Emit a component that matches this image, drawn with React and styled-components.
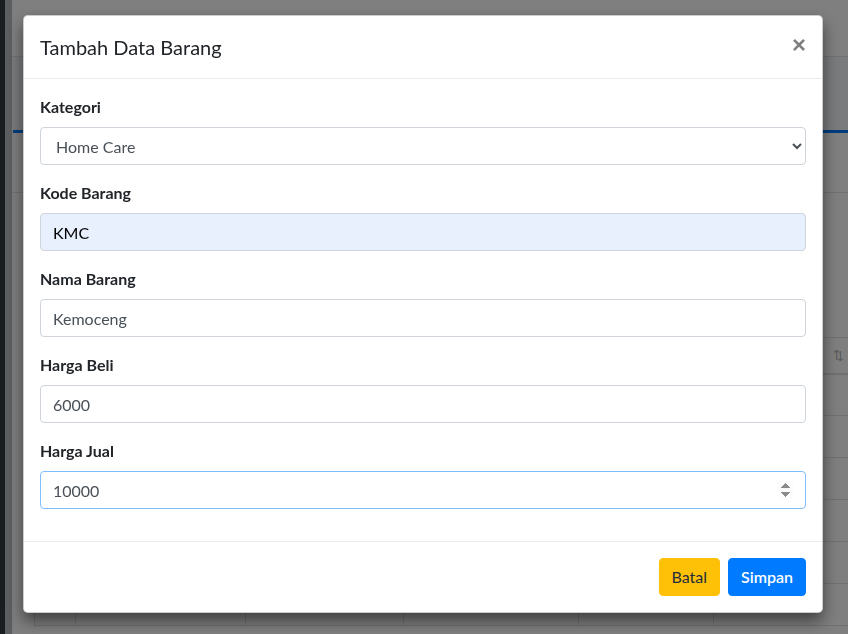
import styled, { createGlobalStyle } from "styled-components";

const GlobalStyle = createGlobalStyle`
  html, body {
    margin: 0;
    padding: 0;
    height: 100%;
  }
  body {
    font-family: "Lato", "Liberation Sans", sans-serif;
    background: #f4f6f9;
    overflow: hidden;
  }
  * {
    box-sizing: border-box;
  }
`;

const Wrapper = styled.div`
  display: flex;
  height: 634px;
  overflow: hidden;
`;

const Sidebar = styled.aside`
  width: 5px;
  background: #343a40;
  flex-shrink: 0;
`;

const SideEdge = styled.div`
  width: 7px;
  background: #b8bcc0;
  flex-shrink: 0;
`;

const Content = styled.div`
  flex: 1;
  display: flex;
  flex-direction: column;
  min-width: 0;
`;

const Navbar = styled.nav`
  height: 57px;
  background: #fff;
  border-bottom: 1px solid #dee2e6;
  flex-shrink: 0;
`;

const PageTitle = styled.h1`
  margin: 0;
  padding: 18px 10px 0;
  height: 73px;
  font-size: 22px;
  font-weight: 400;
  color: #212529;
`;

const Card = styled.div`
  margin-left: 1px;
  background: #fff;
  border-top: 3px solid #007bff;
  flex: 1;
`;

const CardHeader = styled.div`
  height: 60px;
  border-bottom: 1px solid #dee2e6;
`;

const CardBody = styled.div`
  padding: 144px 0 0 21px;
`;

const Table = styled.table`
  border-collapse: collapse;
  table-layout: fixed;
`;

const Th = styled.th`
  height: 36px;
  border: 1px solid #dee2e6;
  border-bottom-width: 2px;
  border-right: 0;
  text-align: right;
  padding: 0 4px;
  font-size: 13px;
  font-weight: 400;
  color: #b0b0b0;
`;

const Td = styled.td`
  height: 42px;
  border: 1px solid #dee2e6;
  border-right: 0;
`;

const Backdrop = styled.div`
  position: fixed;
  inset: 0;
  background: rgba(0, 0, 0, 0.5);
  display: flex;
  justify-content: flex-start;
  align-items: flex-start;
  padding: 15px 0 0 23px;
`;

const Modal = styled.div`
  width: 800px;
  background: #fff;
  border: 1px solid rgba(0, 0, 0, 0.2);
  border-radius: 4.8px;
  box-shadow: 0 8px 16px rgba(0, 0, 0, 0.5);
  display: flex;
  flex-direction: column;
`;

const ModalHeader = styled.div`
  display: flex;
  align-items: center;
  justify-content: space-between;
  padding: 16px;
  border-bottom: 1px solid #e9ecef;
`;

const ModalTitle = styled.h4`
  margin: 0;
  font-size: 20px;
  line-height: 30px;
  font-weight: 400;
  color: #212529;
`;

const Close = styled.button`
  border: 0;
  background: transparent;
  padding: 0;
  margin-bottom: 4px;
  font-family: "Liberation Sans", sans-serif;
  font-size: 24px;
  font-weight: 700;
  line-height: 1;
  color: #000;
  opacity: 0.5;
  cursor: pointer;
`;

const ModalBody = styled.div`
  padding: 16px;
`;

const FormGroup = styled.div`
  margin-bottom: 16px;
`;

const Label = styled.label`
  display: block;
  margin-bottom: 8px;
  font-size: 16px;
  line-height: 24px;
  font-weight: 700;
  color: #212529;
`;

const fieldCss = `
  display: block;
  width: 100%;
  height: 38px;
  padding: 6px 12px;
  font-family: "Lato", "Liberation Sans", sans-serif;
  font-size: 16px;
  line-height: 24px;
  color: #495057;
  border-radius: 4px;
  outline: none;
`;

const Select = styled.select`
  ${fieldCss}
  padding-left: 11px;
  background: #fff;
  border: 1px solid #ced4da;
`;

const Input = styled.input`
  ${fieldCss}
  background: ${(p) => (p.$autofill ? "#e8f0fe" : "#fff")};
  color: ${(p) => (p.$autofill ? "#000" : "#495057")};
  border: 1px solid ${(p) => (p.$focus ? "#80bdff" : "#ced4da")};

  &::-webkit-inner-spin-button {
    opacity: 1;
  }
`;

const ModalFooter = styled.div`
  display: flex;
  justify-content: flex-end;
  align-items: center;
  padding: 12px;
  border-top: 1px solid #e9ecef;
`;

const Button = styled.button`
  margin: 4px;
  height: 38px;
  padding: 6px 12px;
  border: 1px solid ${(p) => p.$bg};
  border-radius: 4px;
  background: ${(p) => p.$bg};
  color: ${(p) => p.$color};
  font-family: "Lato", "Liberation Sans", sans-serif;
  font-size: 16px;
  line-height: 24px;
  font-weight: ${(p) => p.$weight || 400};
  cursor: pointer;
`;

const columns = [41, 170, 158, 175, 135, 135];
const rows = [1, 2, 3, 4, 5, 6];

export default function App() {
  return (
    <>
      <GlobalStyle />
      <Wrapper>
        <Sidebar />
        <SideEdge />
        <Content>
          <Navbar />
          <PageTitle>Data Barang</PageTitle>
          <Card>
            <CardHeader />
            <CardBody>
              <Table>
                <colgroup>
                  {columns.map((w, i) => (
                    <col key={i} style={{ width: w }} />
                  ))}
                </colgroup>
                <thead>
                  <tr>
                    {columns.map((_, i) => (
                      <Th key={i}>{i === columns.length - 1 ? "⇅" : ""}</Th>
                    ))}
                  </tr>
                </thead>
                <tbody>
                  {rows.map((r) => (
                    <tr key={r}>
                      {columns.map((_, i) => (
                        <Td key={i} />
                      ))}
                    </tr>
                  ))}
                </tbody>
              </Table>
            </CardBody>
          </Card>
        </Content>
      </Wrapper>

      <Backdrop>
        <Modal>
          <ModalHeader>
            <ModalTitle>Tambah Data Barang</ModalTitle>
            <Close aria-label="Close">×</Close>
          </ModalHeader>
          <ModalBody>
            <FormGroup>
              <Label>Kategori</Label>
              <Select defaultValue="Home Care">
                <option>Home Care</option>
                <option>Food</option>
                <option>Personal Care</option>
              </Select>
            </FormGroup>
            <FormGroup>
              <Label>Kode Barang</Label>
              <Input $autofill defaultValue="KMC" />
            </FormGroup>
            <FormGroup>
              <Label>Nama Barang</Label>
              <Input defaultValue="Kemoceng" />
            </FormGroup>
            <FormGroup>
              <Label>Harga Beli</Label>
              <Input defaultValue="6000" />
            </FormGroup>
            <FormGroup>
              <Label>Harga Jual</Label>
              <Input $focus type="number" defaultValue="10000" />
            </FormGroup>
          </ModalBody>
          <ModalFooter>
            <Button $bg="#ffc107" $color="#1f2d3d">
              Batal
            </Button>
            <Button $bg="#007bff" $color="#fff" $weight={600}>
              Simpan
            </Button>
          </ModalFooter>
        </Modal>
      </Backdrop>
    </>
  );
}
